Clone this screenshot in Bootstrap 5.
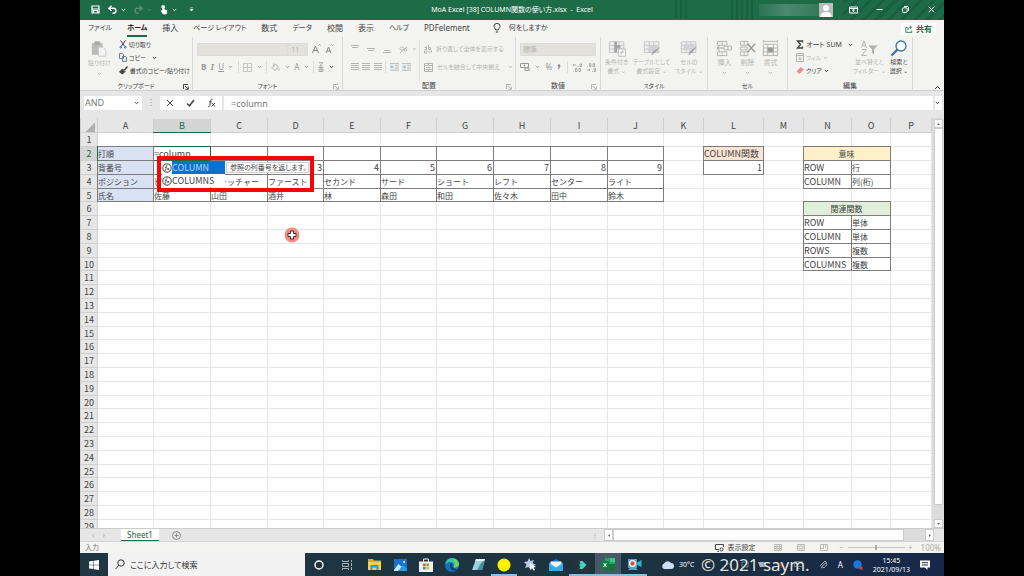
<!DOCTYPE html>
<html lang="ja">
<head>
<meta charset="utf-8">
<meta name="viewport" content="width=device-width, initial-scale=1">
<title>MoA Excel [38] COLUMN関数の使い方.xlsx - Excel</title>
<link href="https://cdn.jsdelivr.net/npm/bootstrap@5.3.0/dist/css/bootstrap.min.css" rel="stylesheet">
<style>
:root{--xl:#1e6b47;--pane:#f3f3f1;--bar:#e6e6e6;--dim:#b4b4b4;--ink:#444}
html,body{height:100%}
body{background:#000;font-family:"Noto Sans","Noto Sans CJK JP",sans-serif;font-size:8px;line-height:12px;color:var(--ink);font-feature-settings:"palt";overflow:hidden}
button,input{font:inherit;color:inherit;font-feature-settings:inherit}
button{border:0;background:none;padding:0;white-space:nowrap;line-height:inherit}
svg{display:block;flex:none}
.desk{height:100vh;padding:0 80px;fill:none;stroke:currentColor}
.app-window{height:100%;background:var(--bar)}
.t6{font-size:6px}
.t7{font-size:7px}
/* title bar */
.titlebar{display:grid;grid-template-columns:1fr auto 1fr;height:20px;color:#fff;background:var(--xl)}
.qat{padding-left:11px;gap:8px}
.win-side{padding-left:86px;background:repeating-linear-gradient(90deg,#1a6040 0 2px,transparent 2px 5px) 82px 0/14px 18px no-repeat,repeating-linear-gradient(90deg,#1a6040 0 2px,transparent 2px 5px) 138px 0/22px 20px no-repeat,repeating-linear-gradient(135deg,#1a6040 0 3px,transparent 3px 9px) 250px 0/140px 20px no-repeat}
.account{width:60px;height:12px;background:linear-gradient(90deg,#2c7353,#4b8a6e 45%,#347a5a)}
.avatar{width:14px;height:14px;background:#b9bdbb;margin-right:7px}
.win-btn{width:26px;display:flex;justify-content:center}
/* menu tabs */
.menu-row{height:18px;background:var(--pane);padding:0 8px;gap:15px}
.menu-row a{color:var(--ink);text-decoration:none;white-space:nowrap;line-height:14px;border-bottom:2px solid transparent}
.menu-row a.on{font-weight:700;color:#222;border-color:var(--xl)}
.share{background:#fff;color:var(--xl);font-weight:700;padding:0 4px;gap:3px}
/* ribbon */
.ribbon{display:grid;grid-template-columns:113fr 150fr 173fr 85fr 107fr 80fr 125fr 31fr;height:54px;background:var(--pane);border-bottom:1px solid #cfcfcf;color:var(--dim);font-size:6px}
.rgroup{position:relative;display:flex;flex-direction:column;padding:3px 4px 0;min-width:0;border-right:1px solid #d8d8d8;margin-bottom:2px}
.rgroup.bare{border:0}
.rbody{height:41px;display:flex}
.rgroup.tight{padding-top:1px}
.tight .rbody{height:43px}
.tight .tall{padding-top:2px}
.rlabel{color:var(--ink);text-align:center;line-height:10px}
.launch{position:absolute;right:3px;bottom:1px}
.live{color:var(--ink)}
.tall{display:flex;flex-direction:column;align-items:center;line-height:9px}
.tall svg{margin-bottom:1px}
.trow{display:flex;align-items:center;height:18px;justify-content:space-between}
.srow{display:flex;align-items:center;height:13px;gap:2px}
.letter{font-size:8px}
.align-col{width:64px}
.fake-combo{height:13px;min-width:0;border:1px solid #dcdcd8;background:#e2e1dc;border-radius:0;padding:0 2px;appearance:none;color:var(--dim);line-height:11px;font-size:7px}
.vr-s{width:1px;height:12px;background:#dadada}
/* formula bar */
.fbar{height:27px;padding:5px 2px 8px 4px;font-size:9px;gap:2px}
.fbar>div,.fbar>input{background:#fff;height:14px;border:0}
.namebox{width:58px;padding:0 3px 0 1px}
.namebox input{width:40px;border:0;padding:0;line-height:14px;color:#777}
.fbtns{width:62px}
.fbar>.dots{width:14px;background:none}
.fbar>.formula{min-width:0;padding:0 0 0 7px;outline:0;border:0;color:#777}
.expand{padding-right:2px}
/* sheet */
.sheet-wrap{min-height:0;overflow:hidden}
.grid-pane{flex:1;min-width:0;overflow:hidden;background:#fff}
.cells{table-layout:fixed;width:100%;border-collapse:collapse;font-family:"Noto Sans CJK JP",sans-serif;font-size:9px;line-height:12px;font-feature-settings:normal}
.cells th{background:var(--bar);font-weight:400;text-align:center;padding:0;border:1px solid #cfcfcf;border-top-color:var(--bar)}
.cells th.sel{background:#d4d4d4;color:var(--xl)}
.cells thead th.sel{border-bottom:1px double var(--xl)}
.cells tbody th.sel{border-right:1px double var(--xl)}
.cells tr{height:14px}
.cells tbody tr:nth-child(5n){height:13px}
.cells tbody tr:nth-child(5n) :is(td,th){line-height:11px}
.cells td{padding:0 1px 0 0;border:1px solid #e6e6e6;white-space:nowrap;overflow:hidden}
.cells td.bx{border:1px double #7c7c7c}
.cells td.jp{font-size:8px}
.cells td.num{text-align:right}
.cells td.mid{text-align:center}
.cells td.c-blue{background:#d9e2f3}
.cells td.c-peach{background:#fbe4d6}
.cells td.c-yellow{background:#fff0ca}
.cells td.c-green{background:#e1eeda}
.cells td.editing{position:relative;overflow:visible;border:1px double var(--xl)}
.cell-input{display:block;width:54px;height:12px;line-height:12px;border:0;padding:0;outline:0}
.corner{width:10px;height:10px;margin:2px 2px 0 auto;background:linear-gradient(135deg,transparent 50%,#b0b0b0 50%)}
.suggest{position:absolute;z-index:3;left:3px;top:9px;width:157px;height:36px;border:4px solid #f60505}
.suggest-list{position:absolute;left:1px;top:1px;width:63px;background:#fff;margin:0;padding:0;list-style:none}
.suggest-list button{display:flex;align-items:center;width:100%;height:13px;color:var(--ink)}
.suggest-list span{flex:1;text-align:left;line-height:13px}
.suggest-list .on span{background:#0a70d2;color:#b5d8fa}
.tip{position:absolute;left:65px;top:2px;width:83px;height:11px;border:1px solid #d0d0d0;background:#fff;font-size:7px;line-height:9px;padding-left:3px;font-feature-settings:"palt"}
.pointer{position:absolute;z-index:3;left:130px;top:80px}
/* scroll bars */
.vscroll{width:12px;padding:1px 1px 0 2px;background:#dcdcdc}
.sbtn{background:#fff;width:9px;height:9px;display:flex;align-items:center;justify-content:center;border:1px solid #ccc;color:#666}
.sthumb{background:#fff;border:1px solid #ccc}
.vgap{height:14px}
.hgap{width:21px}
.tabs-row{height:13px;border-top:1px solid #ccc;color:#aaa}
.sheet-tab{width:38px;height:12px;background:#fff;color:var(--xl);line-height:11px;border-bottom:1px solid var(--xl);margin:0 13px 0 16px}
.hscroll{width:330px;background:#dcdcdc;margin-right:10px}
.status{height:12px;background:var(--pane);border-top:1px solid #d5d5d5;padding:0 3px 0 5px;color:#777;font-size:7px}
.views{gap:15px;margin:0 12px 0 18px;color:#bbb}
.zoomer{appearance:none;width:57px;height:7px;background:linear-gradient(#c4c4c4,#c4c4c4) center/100% 1px no-repeat}
.zoomer::-webkit-slider-thumb{appearance:none;width:2px;height:5px;background:#aaa}
/* taskbar */
.taskbar{position:relative;height:23px;background:linear-gradient(90deg,#1f3743,#1d3440 60%,#17274a);color:#fff}
.start{width:28px}
.find{width:197px;background:#f2f2f2;color:#333;padding-left:7px;gap:5px}
.find input{border:0;background:none;width:160px;padding:0}
.find input::placeholder{color:#333;opacity:1}
.tb{width:26px;display:flex;align-items:center;justify-content:center;border-bottom:2px solid transparent;border-top:2px solid transparent}
.tb.wide{width:28px}
.tb.run{border-bottom-color:#86bfe4;background-clip:padding-box}
.tb.cur{background:#455966;background-clip:border-box}
.weather{gap:5px;padding-left:14px}
.hidden-tray{gap:9px;opacity:.75;padding-left:30px}
.tray{gap:10px;padding-right:14px}
.clock{font-size:7px;line-height:9px;text-align:center}
.credit{position:absolute;z-index:4;left:621px;top:0;font-size:17px;line-height:23px;color:#e0e4e6;white-space:nowrap;text-shadow:0 0 2px #222}
</style>
</head>
<body>
<svg width="0" height="0" class="position-absolute" aria-hidden="true">
  <symbol id="chev" viewBox="0 0 5 4"><path d="M.8 1 2.500 2.700 4.200 1"/></symbol>
  <symbol id="launch" viewBox="0 0 6 6"><path d="M.5 5V.5H5M2 2l3 3M5.300 2.500v2.800H2.500"/></symbol>
  <symbol id="fx" viewBox="0 0 10 10"><circle cx="5" cy="5" r="4.200" fill="#fff"/><path d="M5.500 2.300c-1-.3-1.200.5-1.400 2L3.600 7c-.2.7-.5.9-1 .7M3 4.300h2M5.200 4.800l2 2.400M7.200 4.800l-2 2.400" stroke-width=".8"/></symbol>
  <symbol id="lines" viewBox="0 0 8 8"><path d="M0 .5h8M0 2.500h8M0 4.500h8M0 6.500h8"/></symbol>
  <symbol id="brush" viewBox="0 0 9 9"><path d="M8.500.5 5.500 4" stroke-width="1.500"/><path d="m3.500 3 2.500 2.500L3.500 8 .5 6Z" fill="currentColor"/></symbol>
  <symbol id="sheet" viewBox="0 0 20 18"><path d="M1.500 1.500h16v12h-16zM1.500 5.500h16M1.500 9.500h16M7 1.500v12M12 1.500v12" stroke="#c4c4c4" fill="#efefef"/></symbol>
</svg>
<div class="desk">
<div class="app-window d-flex flex-column">

<header class="titlebar">
  <div class="qat d-flex align-items-center">
    <button aria-label="上書き保存"><svg width="9" height="9" viewBox="0 0 9 9"><path d="M1 1h7v7H1zM2.500 8V5.500h4V8M1 4h7" stroke-width="1.200"/></svg></button>
    <button class="d-flex align-items-center gap-1" aria-label="元に戻す"><svg width="9" height="9" viewBox="0 0 9 9"><path d="M3.500.8.9 3.300l2.600 2.500M1 3.300h4.500a2.400 2.400 0 0 1 0 4.900H4.500" stroke-width="1.400"/></svg><svg width="5" height="4"><use href="#chev"/></svg></button>
    <button class="d-flex align-items-center gap-1 opacity-25" aria-label="やり直し"><svg width="9" height="9" viewBox="0 0 9 9"><path d="M5.500.8 8.100 3.300 5.500 5.800M8 3.300H3.500a2.400 2.400 0 0 0 0 4.900h1" stroke-width="1.400"/></svg><svg width="5" height="4"><use href="#chev"/></svg></button>
    <button class="d-flex align-items-center gap-1" aria-label="タッチ/マウス モード"><svg width="8" height="10" viewBox="0 0 8 10"><path d="M2.500 1v5L1 5.500 3 9h3.500L7 5.500 4 4.500V1Z" fill="#fff" stroke-width=".6"/><circle cx="3.200" cy="1.800" r="1.600" stroke-width=".8"/></svg><svg width="5" height="4"><use href="#chev"/></svg></button>
    <button class="ms-1" aria-label="カスタマイズ"><svg width="5" height="5" viewBox="0 0 5 5"><path d="M1 .8h3M1 2.500h3L2.500 4Z" fill="#fff" stroke-width=".6"/></svg></button>
  </div>
  <div class="t7 align-self-center">MoA Excel [38] COLUMN関数の使い方.xlsx &nbsp;-&nbsp; Excel</div>
  <div class="win-side d-flex align-items-center justify-content-end">
    <div class="account"></div>
    <div class="avatar"><svg width="14" height="14" viewBox="0 0 14 14" stroke="none" fill="#fff"><circle cx="7" cy="5" r="3"/><path d="M1.500 14c0-4 2.500-5 5.500-5s5.500 1 5.500 5Z"/></svg></div>
    <button class="win-btn" aria-label="リボンの表示"><svg width="9" height="8" viewBox="0 0 9 8"><path d="M.5 1h8v6h-8zM.5 2.500h8M4.500 6V3.500M3.200 4.500 4.500 3.300l1.300 1.200"/></svg></button>
    <button class="win-btn" aria-label="最小化"><svg width="7" height="7" viewBox="0 0 7 7"><path d="M.5 3.500h6"/></svg></button>
    <button class="win-btn" aria-label="元に戻す(縮小)"><svg width="7" height="7" viewBox="0 0 7 7"><rect x=".5" y="1.800" width="4.600" height="4.600" rx="1"/><path d="M2 .6h3.500q1 0 1 1V5"/></svg></button>
    <button class="win-btn" aria-label="閉じる"><svg width="7" height="7" viewBox="0 0 7 7"><path d="m.7.7 5.600 5.600M6.300.7.7 6.300"/></svg></button>
  </div>
</header>

<nav class="menu-row d-flex align-items-center">
  <a href="#" class="t7">ファイル</a><a href="#" class="on t7">ホーム</a><a href="#">挿入</a><a href="#" class="t7">ページ レイアウト</a><a href="#">数式</a><a href="#" class="t7">データ</a><a href="#">校閲</a><a href="#">表示</a><a href="#" class="t7">ヘルプ</a><a href="#">PDFelement</a>
  <a href="#" class="t7 d-flex align-items-center gap-2 ms-2"><svg width="8" height="10" viewBox="0 0 8 10"><path d="M2.700 7C2.700 5.500 1 5 1 3.300a3 3 0 0 1 6 0C7 5 5.300 5.500 5.300 7ZM2.800 9h2.400"/></svg>何をしますか</a>
  <button class="share d-flex align-items-center ms-auto"><svg width="8" height="8" viewBox="0 0 8 8"><path d="M2.500 2.500H.8v4.800h6V5.500M2.800 5c0-2 1.200-2.800 3-2.800M4.800.7 6.600 2.200 4.800 3.800" stroke-width=".9"/></svg>共有</button>
</nav>

<section class="ribbon">
  <div class="rgroup tight">
    <div class="rbody">
      <button class="tall me-1 px-1"><svg width="18" height="18" viewBox="0 0 20 19"><path d="M2 3h12v13H2z" fill="#bdbabb" stroke="none"/><path d="M5 1h6v4H5z" fill="#a8a8a8" stroke="none"/><path d="M9.500 7.500h5l3 3v7h-8z" fill="#f5f5f5" stroke="#c9c7cc"/></svg>貼り付け<svg width="5" height="4" class="mt-1"><use href="#chev"/></svg></button>
      <div class="live">
        <button class="srow"><svg width="8" height="9" viewBox="0 0 8 9"><path d="M1.500.5 5.500 6M6.500.5 2.500 6"/><path d="M1 6.500h1.500V8H1zM5.500 6.500H7V8H5.500z" stroke="#4b86c2"/></svg>切り取り</button>
        <button class="srow"><svg width="8" height="9" viewBox="0 0 8 9"><path d="M.5.5h3l1 1v4h-4zM3.500 3.500h3l1 1v4h-4z" fill="#e8eef5" stroke="#77808a"/></svg>コピー<svg width="5" height="4" class="ms-1"><use href="#chev"/></svg></button>
        <button class="srow" disabled><svg width="9" height="9"><use href="#brush"/></svg>書式のコピー/貼り付け</button>
      </div>
    </div>
    <div class="rlabel">クリップボード</div><svg class="launch live" width="6" height="6"><use href="#launch"/></svg>
  </div>

  <div class="rgroup">
    <div class="rbody flex-column">
      <div class="trow justify-content-start">
        <input class="fake-combo flex-grow-1" aria-label="フォント名" disabled>
        <select class="fake-combo pe-2" aria-label="フォント サイズ" disabled><option>11</option></select>
        <button class="ms-1" aria-label="拡大"><svg width="9" height="10" viewBox="0 0 9 10" stroke="#888"><path d="M.5 9 3.500 2l3 7M1.500 6.500h4M6.500 1.500l1-1 1 1"/></svg></button>
        <button class="ms-1 me-1" aria-label="縮小"><svg width="9" height="10" viewBox="0 0 9 10" stroke="#888"><path d="M1 9l2.500-6L6 9M2 7h3M6.500.5l1 1 1-1"/></svg></button>
      </div>
      <div class="trow px-1" style="color:#999">
        <button class="letter fw-bold">B</button><button class="letter fst-italic fw-bold">I</button><button class="letter text-decoration-underline">U</button><svg width="5" height="4"><use href="#chev"/></svg><i class="vr-s"></i>
        <button aria-label="罫線"><svg width="9" height="9" viewBox="0 0 9 9" stroke="#c5c5c5"><path d="M.5.5h8v8h-8zM4.500.5v8M.5 4.500h8"/></svg></button><svg width="5" height="4"><use href="#chev"/></svg><i class="vr-s"></i>
        <button aria-label="塗りつぶし"><svg width="9" height="9" viewBox="0 0 9 9" stroke="#aaa"><path d="M1 4.500 4.500 1 7.500 4 4 7.500ZM3 .5v3M8 5.500v2"/></svg></button><svg width="5" height="4"><use href="#chev"/></svg>
        <button class="letter">A</button><svg width="5" height="4"><use href="#chev"/></svg><i class="vr-s"></i>
        <button aria-label="ふりがな"><svg width="6" height="10" viewBox="0 0 6 10" stroke="#aaa"><path d="M1 .7h4L1.500 4h3M.5 5.500h5M1 7h4v2.500H1zM3 5.500v4"/></svg></button><svg class="live" width="5" height="4"><use href="#chev"/></svg>
      </div>
    </div>
    <div class="rlabel">フォント</div><svg class="launch" width="6" height="6"><use href="#launch"/></svg>
  </div>

  <div class="rgroup">
    <div class="rbody gap-2">
      <div class="align-col ps-1">
        <div class="trow justify-content-start gap-1">
          <svg width="8" height="8" viewBox="0 0 8 8"><path d="M0 .5h8M1 2.500h6"/></svg><svg width="8" height="8" class="ms-1" viewBox="0 0 8 8"><path d="M0 3.500h8M1 5.500h6"/></svg><svg width="8" height="8" class="ms-1" viewBox="0 0 8 8"><path d="M1 5.500h6M0 7.500h8"/></svg><i class="vr-s"></i>
          <svg width="9" height="9" viewBox="0 0 9 9"><path d="M1 8 8 2M1 3.500l2-2 2 2-2 2ZM4.500 5l2-2 1.500 2-1.500 1.500Z"/></svg><svg width="5" height="4"><use href="#chev"/></svg>
        </div>
        <div class="trow">
          <svg width="8" height="8"><use href="#lines"/></svg><svg width="8" height="8"><use href="#lines"/></svg><svg width="8" height="8"><use href="#lines"/></svg><i class="vr-s"></i>
          <svg width="9" height="8" viewBox="0 0 9 8"><path d="M0 .7h9M5 2.800h4M5 5h4M0 7.200h9"/><path d="M4 4H.5M2 2.500.5 4 2 5.500" stroke="#8fa9c0"/></svg><svg width="9" height="8" viewBox="0 0 9 8"><path d="M0 .7h9M5 2.800h4M5 5h4M0 7.200h9"/><path d="M0 4h3.500M2 2.500 3.500 4 2 5.500" stroke="#8fa9c0"/></svg>
        </div>
      </div>
      <div class="flex-grow-1 border-start ps-1">
        <button class="trow justify-content-start gap-1"><svg width="8" height="9" viewBox="0 0 8 9"><path d="M.5 2.500h2v2h-2M2.500 1v3.500M4.500 0v4M4.500 2.500h2v2h-2M3 6H.5v2H3M7.500 5.500v1.500H4.500"/></svg>折り返して全体を表示する</button>
        <button class="trow justify-content-start gap-1"><svg width="9" height="9" viewBox="0 0 9 9"><path d="M.5.5h8v8h-8zM.5 2.500h8M.5 6.500h8M4.500.5v2M4.500 6.500v2M2 4.500h5"/></svg>セルを結合して中央揃え<svg width="5" height="4" class="ms-1"><use href="#chev"/></svg></button>
      </div>
    </div>
    <div class="rlabel t7">配置</div><svg class="launch" width="6" height="6"><use href="#launch"/></svg>
  </div>

  <div class="rgroup">
    <div class="rbody flex-column">
      <div class="trow"><select class="fake-combo w-100" aria-label="表示形式" disabled><option>標準</option></select></div>
      <div class="trow" style="color:#999">
        <svg width="10" height="8" viewBox="0 0 10 8"><path d="M.5.5h8v4h-8zM4.500 1.500v2M5 5h4v2.500H5z"/></svg><svg width="5" height="4"><use href="#chev"/></svg><button class="letter">%</button><button class="fw-bold" aria-label="桁区切り"><svg width="4" height="6" viewBox="0 0 4 6"><path d="M2 .5a1 1 0 1 0 0 2L1 5C3 4 4 .5 2 .5Z" fill="#888" stroke="#888" stroke-width=".5"/></svg></button><i class="vr-s"></i>
        <svg width="9" height="9" viewBox="0 0 9 9"><path d="M0 2h3M1 1 0 2l1 1M5 3.500h.8M7 1h1.500v2.500H7zM.3 8.500H1M2.500 5.500H4v3H2.500zM6 5.500h1.500v3H6z" stroke-width=".8"/></svg>
        <svg width="9" height="9" viewBox="0 0 9 9"><path d="M.3 3.500H1M2.500.7H4v3H2.500zM6 .7h1.500v3H6zM0 7h3M2 6l1 1-1 1M5 8.500h.8M7 5.500h1.500v3H7z" stroke-width=".8"/></svg>
      </div>
    </div>
    <div class="rlabel t7">数値</div><svg class="launch" width="6" height="6"><use href="#launch"/></svg>
  </div>

  <div class="rgroup">
    <div class="rbody justify-content-between">
      <button class="tall"><svg width="18" height="17" viewBox="0 0 20 18"><use href="#sheet" width="20" height="18"/><path d="M7 1.500v12h3V9h4V5.500h-4v-4Z" fill="#a9a4aa" stroke="none"/><path d="M11.500 9.500h8v8h-8z" fill="#fff"/><path d="M13 13h5M14 16l3-5"/></svg>条件付き<br>書式 ⌄</button>
      <button class="tall"><svg width="18" height="17" viewBox="0 0 20 18"><use href="#sheet" width="20" height="18"/><path d="M6 6h11v7H6z" fill="#d5d0d5" stroke="none"/><path d="m19 7-5 6-5 4 2-5Z" fill="#a5a2a5" stroke="none"/></svg>テーブルとして<br>書式設定 ⌄</button>
      <button class="tall"><svg width="18" height="17" viewBox="0 0 20 18"><use href="#sheet" width="20" height="18"/><path d="M4 4h12v7H4z" fill="#d5d0d5" stroke="none"/><path d="m19 6-5 7-5 4 2-5Z" fill="#a5a2a5" stroke="none"/></svg>セルの<br>スタイル ⌄</button>
    </div>
    <div class="rlabel">スタイル</div>
  </div>

  <div class="rgroup">
    <div class="rbody justify-content-between px-1 t7">
      <button class="tall"><svg width="17" height="17" viewBox="0 0 18 18"><path d="M1.500 1.500h10v4h-10zM6.500 1.500v4M8.500 6.500h8v4h-8zM12.500 6.500v4M1.500 12.500h10v4h-10zM6.500 12.500v4"/><path d="M8 8.500H1M4 5.500 1 8.500l3 3" stroke="#999"/></svg>挿入<svg width="5" height="4" class="mt-1"><use href="#chev"/></svg></button>
      <button class="tall"><svg width="17" height="17" viewBox="0 0 18 18"><path d="M1.500 1.500h8v4h-8zM5.500 1.500v4M1.500 7.500h7v3h-7zM1.500 12.500h8v4h-8zM5.500 12.500v4"/><path d="m9 4 8 9M17 4l-8 9" stroke="#999" stroke-width="1.500"/></svg>削除<svg width="5" height="4" class="mt-1"><use href="#chev"/></svg></button>
      <button class="tall"><svg width="17" height="17" viewBox="0 0 18 18"><path d="M1.500 4.500h15v12h-15zM6 4.500v12M12 4.500v12M1.500 8.500h15M1.500 12.500h15M1.500 0v3M16.500 0v3M2 1.500h14"/><path d="M6 8h6v5H6z" fill="#999"/></svg>書式<svg width="5" height="4" class="mt-1"><use href="#chev"/></svg></button>
    </div>
    <div class="rlabel">セル</div>
  </div>

  <div class="rgroup tight">
    <div class="rbody">
      <div class="flex-grow-1 ps-1">
        <button class="srow live t7"><svg width="8" height="9" viewBox="0 0 8 9"><path d="M6.500 2.500V1h-5L4.500 4.500l-3 3.500h5V6.500" stroke-width="1.400"/></svg>オート SUM<svg width="5" height="4" class="ms-1"><use href="#chev"/></svg></button>
        <button class="srow"><svg width="8" height="9" viewBox="0 0 8 9"><path d="M.5.5h7v8h-7zM.5 2.500h7M4 3.500V7M2.500 5.500 4 7l1.500-1.500"/></svg>フィル<svg width="5" height="4"><use href="#chev"/></svg></button>
        <button class="srow live"><svg width="8" height="9" viewBox="0 0 8 9" stroke="none"><path d="M4.500 1 8 3.500 3.500 8 .5 5.500Z" fill="#e88f93"/></svg>クリア<svg width="5" height="4"><use href="#chev"/></svg></button>
      </div>
      <button class="tall me-1"><svg width="18" height="17" viewBox="0 0 18 17"><path d="M1.500 7.500 4 1l2.500 6.500M2.500 5.500h3M1.800 9.500h4.500L1.800 15.500h5"/><path d="M8.500 5.500h9l-3.500 4v5l-2-1.500V9.500Z" fill="#b0b0b0" stroke="none"/></svg>並べ替えと<br>フィルター ⌄</button>
      <button class="tall live me-1"><svg width="18" height="17" viewBox="0 0 18 17" stroke="#3a77a8"><circle cx="11" cy="6" r="5" fill="#fff" stroke-width="1.300"/><path d="M7.500 9.500 1.500 15.500" stroke-width="2.400"/></svg>検索と<br>選択 ⌄</button>
    </div>
    <div class="rlabel t7">編集</div>
  </div>
  <div class="rgroup bare"><svg class="launch live" width="7" height="5" viewBox="0 0 7 5"><path d="M1 4 3.500 1.500 6 4"/></svg></div>
</section>

<div class="fbar d-flex">
  <div class="namebox d-flex align-items-center justify-content-between"><input value="AND" aria-label="名前ボックス"><svg width="5" height="4"><use href="#chev"/></svg></div>
  <div class="dots d-flex align-items-center justify-content-center"><svg width="2" height="8" viewBox="0 0 2 8"><path d="M1 0v8" stroke-dasharray="1 2" stroke="#999"/></svg></div>
  <div class="fbtns d-flex align-items-center justify-content-around">
    <button aria-label="キャンセル"><svg width="8" height="8" viewBox="0 0 8 8"><path d="m1 1 6 6M7 1 1 7"/></svg></button>
    <button aria-label="入力"><svg width="9" height="8" viewBox="0 0 9 8"><path d="m1 4.500 2.500 2.300L8 1" stroke-width="1.500"/></svg></button>
    <button aria-label="関数の挿入"><svg width="9" height="10" viewBox="0 0 9 10"><path d="M5.500 1.200c-1.300-.5-1.700.5-2 2.300L2.800 7.500c-.2 1-.7 1.300-1.500 1M2 3.800h2.800M4.800 5 8 8.500M8 5 4.500 8.500"/></svg></button>
  </div>
  <input class="formula flex-grow-1 me-n1" value="=column" aria-label="数式バー">
  <div class="expand d-flex align-items-center"><svg width="5" height="4"><use href="#chev"/></svg></div>
</div>

<main class="sheet-wrap d-flex flex-grow-1">
  <div class="grid-pane">
    <table class="cells">
      <colgroup id="cols"></colgroup>
      <thead><tr id="heads"><th><div class="corner"></div></th></tr></thead>
      <tbody id="rows"></tbody>
    </table>
  </div>
  <div class="vscroll d-flex flex-column">
    <button class="sbtn" aria-label="上へ"><svg width="5" height="4" viewBox="0 0 5 4"><path d="M1 3h3L2.500 1Z" fill="#666" stroke="none"/></svg></button>
    <div class="sthumb flex-grow-1"></div><div class="vgap"></div>
    <button class="sbtn" aria-label="下へ"><svg width="5" height="4" viewBox="0 0 5 4"><path d="M1 1h3L2.500 3Z" fill="#666" stroke="none"/></svg></button>
  </div>
</main>

<div class="tabs-row d-flex">
  <div class="d-flex align-items-center gap-2 ps-2"><span class="ps-1">‹</span><span>›</span></div>
  <button class="sheet-tab">Sheet1</button>
  <button aria-label="新しいシート" style="color:#888"><svg width="9" height="9" viewBox="0 0 9 9"><circle cx="4.500" cy="4.500" r="4"/><path d="M2.500 4.500h4M4.500 2.500v4"/></svg></button>
  <svg class="ms-auto me-2 mt-1" width="2" height="6" viewBox="0 0 2 6"><path d="M1 0v6" stroke-dasharray="1 1"/></svg>
  <div class="hscroll d-flex">
    <button class="sbtn h-100" aria-label="左へ"><svg width="4" height="5" viewBox="0 0 4 5"><path d="M3 1v3L1 2.500Z" fill="#666" stroke="none"/></svg></button>
    <div class="sthumb flex-grow-1"></div><div class="hgap"></div>
    <button class="sbtn h-100" aria-label="右へ"><svg width="4" height="5" viewBox="0 0 4 5"><path d="M1 1v3L3 2.500Z" fill="#666" stroke="none"/></svg></button>
  </div>
</div>

<div class="status d-flex align-items-center">
  <span>入力</span>
  <button class="live ms-auto d-flex align-items-center gap-1"><svg width="9" height="8" viewBox="0 0 9 8"><path d="M8.500 3V.5h-8v5H4M2.500 7.500H4"/><circle cx="6.500" cy="5.500" r="1.500"/></svg>表示設定</button>
  <div class="views d-flex align-items-center">
    <svg width="8" height="7" viewBox="0 0 8 7"><path d="M.5.5h7v6h-7zM.5 2.500h7M.5 4.500h7M3 .5v6M5.500.5v6"/></svg>
    <svg width="8" height="7" viewBox="0 0 8 7"><path d="M.5.5h7v6h-7zM2 2h4v3H2z"/></svg>
    <svg width="8" height="7" viewBox="0 0 8 7"><path d="M.5.5h7v6h-7zM.5 4.500h3v-4M5.500.5v3"/></svg>
  </div>
  <div class="d-flex align-items-center gap-1" style="color:#aaa"><span>−</span><input type="range" class="zoomer" aria-label="ズーム"><span>+</span><span class="ms-1 letter">100%</span></div>
</div>

<footer class="taskbar d-flex">
  <button class="start d-flex align-items-center justify-content-center" aria-label="スタート"><svg width="10" height="10" viewBox="0 0 10 10" stroke="none"><path d="M0 1.500 4.500.8v3.900H0zM5 .7 10 0v4.700H5zM0 5.200h4.500v3.900L0 8.500zM5 5.200h5V10l-5-.7z" fill="#fff"/></svg></button>
  <label class="find d-flex align-items-center"><svg width="10" height="11" viewBox="0 0 10 11"><circle cx="6" cy="4" r="3.200"/><path d="M3.700 6.300.7 10"/></svg><input placeholder="ここに入力して検索" aria-label="検索"></label>
  <button class="tb wide" aria-label="Cortana"><svg width="10" height="10" viewBox="0 0 10 10"><circle cx="5" cy="5" r="4" stroke-width="1.400"/></svg></button>
  <button class="tb wide" aria-label="タスク ビュー"><svg width="11" height="10" viewBox="0 0 11 10" stroke="#a5afb4"><path d="M.5 0v1.500h6V0M.5 10V8.500h6V10M.5 3.500h6v3h-6zM9.500 0v2M9.500 3v3M9.500 7v3"/></svg></button>
  <button class="tb" aria-label="エクスプローラー"><svg width="13" height="11" viewBox="0 0 13 11" stroke="none"><path d="M0 0h5l1 1.500h7V11H0z" fill="#e7a737"/><path d="M0 3h13v8H0z" fill="#f8ce62"/><path d="M2.500 6h8v5h-2V8.500h-4V11h-2z" fill="#3f95cf"/></svg></button>
  <button class="tb" aria-label="フォト"><svg width="13" height="12" viewBox="0 0 13 12" stroke="none"><path d="M0 0h13v12H0z" fill="#1672ca"/><path d="m0 11 4.500-6 8 7H0z" fill="#cce8fa"/><path d="M4 12 9 6l4 4v2z" fill="#2b9aeb"/><circle cx="10" cy="3" r="1" fill="#fff"/></svg></button>
  <button class="tb" aria-label="Microsoft Store"><svg width="14" height="14" viewBox="0 0 14 14" stroke="none"><path d="M4.500 4V1h5v3" stroke="#fff"/><path d="M0 3.500h14V14H0z" fill="#f2f2f2"/><path d="M4 5.500h2.700v2.700H4z" fill="#e85635"/><path d="M7.300 5.500H10v2.700H7.300z" fill="#75b62d"/><path d="M4 8.800h2.700v2.700H4z" fill="#2a9de0"/><path d="M7.300 8.800H10v2.700H7.300z" fill="#f5b91d"/></svg></button>
  <button class="tb" aria-label="Edge"><svg width="14" height="14" viewBox="0 0 14 14" stroke="none"><circle cx="7" cy="7" r="7" fill="#1571bd"/><path d="M.3 6C1 2 4 0 7 0c4 0 7 3 7 6 0 2-2 3.500-4 3.500-1.500 0-1.500-1-1-1.500C10 6 7 3.500 4.500 4 2 4.500 1 6 .3 6Z" fill="#35c3b0"/><path d="M10 1c3 1.500 4 4 4 5.500S12 9.500 10 9.500c-1 0-1.500-.8-1-1.500 2-2 1-4.500-1-6Z" fill="#6ed45c"/><path d="M5 8c0-2 1-3 2.500-3C6 7 7.500 11 12 11.200 9 14 5 12 5 8Z" fill="#123b66"/></svg></button>
  <button class="tb" aria-label="メモ帳"><svg width="13" height="13" viewBox="0 0 13 13" stroke="none"><path d="M4 1h9l-3 11H0z" fill="#9bd2dd"/><path d="M4 1h9l-.5 2H3.200z" fill="#e6f1f1"/><path d="M9 5 13 2l-3 10H5z" fill="#4e8f9f"/></svg></button>
  <button class="tb run" aria-label="付箋"><svg width="14" height="14" viewBox="0 0 14 14" stroke="none"><circle cx="7" cy="7" r="6.500" fill="#fff200"/></svg></button>
  <button class="tb" aria-label="スクリーン ツール"><svg width="13" height="13" viewBox="0 0 13 13" stroke="none"><path d="m5 0 1.500 3L10 2 8.500 5 12 7 8 8l-1 4-2.500-3L1 10l1.500-3.500L0 4l3.500-.5z" fill="#b7cbf2"/><path d="m6 5 6 4-2.500.5L11 12l-1.500.8L8 10l-2 2z" fill="#fff"/></svg></button>
  <button class="tb" aria-label="メール"><svg width="14" height="12" viewBox="0 0 14 12" stroke="none"><path d="m0 4 7-4 7 4v8H0z" fill="#1675c7"/><path d="M1.500 2.500h11V7L7 9.500 1.500 7z" fill="#eef4f8"/><path d="m0 4 7 4.500L14 4v8H0z" fill="#35a9ee"/></svg></button>
  <button class="tb run" aria-label="Filmora"><svg width="14" height="14" viewBox="0 0 14 14" stroke="none"><path d="M0 0h14v14H0z" fill="#28313c"/><path d="M4.500 3h3l4 4-4 4h-3l1-3-2-1 2-1z" fill="#42d5bd"/></svg></button>
  <button class="tb run cur" aria-label="Excel"><svg width="14" height="13" viewBox="0 0 14 13" stroke="none"><path d="M4 0h10v13H4z" fill="#23a466"/><path d="M9 0h5v4H9z" fill="#3ec481"/><path d="M4 6h10v7H4z" fill="#16713f"/><path d="M0 3h8v8H0z" fill="#107c41"/><path d="m2.500 5 3 4M5.500 5l-3 4" stroke="#fff"/></svg></button>
  <button class="tb run" aria-label="レコーダー"><svg width="15" height="13" viewBox="0 0 15 13" stroke="none"><path d="M1 1h9v9H1zM10 4.500 14.500 2v7L10 7zM3 10h6l2 2H1z" fill="#3eafc9"/><circle cx="5.500" cy="5.500" r="3.500" fill="#fff"/><circle cx="5.500" cy="5.500" r="2.200" fill="#e84a3b"/></svg></button>
  <div class="weather d-flex align-items-center"><svg width="13" height="9" viewBox="0 0 13 9" stroke="none"><path d="M3 9a3 3 0 0 1 0-5.500 4 4 0 0 1 7-.5 3 3 0 0 1 0 6z" fill="#c7e2f6"/></svg><span class="t7">30°C</span></div>
  <div class="hidden-tray d-flex align-items-center" aria-hidden="true">
    <svg width="8" height="9" viewBox="0 0 8 9" stroke="#93a3ad"><path d="M1.500 5.500 4 3l2.500 2.500"/></svg>
    <svg width="8" height="9" viewBox="0 0 8 9" stroke="#93a3ad"><path d="M1 2h6v5H1z"/></svg>
    <svg width="10" height="9" viewBox="0 0 10 9" stroke="none"><path d="M0 2h8v5H2z" fill="#dfe6ea"/></svg>
    <svg width="8" height="9" viewBox="0 0 8 9" stroke="none"><circle cx="4" cy="5" r="2.500" fill="#d8432d"/></svg>
    <svg width="9" height="9" viewBox="0 0 9 9" stroke="#93a3ad"><path d="M.5 1.500h8v5h-8zM3 8.500h3"/></svg>
  </div>
  <div class="tray d-flex align-items-center ms-auto">
    <svg width="9" height="9" viewBox="0 0 9 9" stroke="#ccd4da"><path d="m1 6 5-5 1.500 1.500-5 4M2 8c2-2 3 1 4-1s3-2 1-4" stroke-width=".8"/></svg>
    <span>A</span>
    <svg width="10" height="10" viewBox="0 0 10 10" stroke="none"><circle cx="4.500" cy="4.500" r="4.200" fill="#1a77db"/><circle cx="8" cy="8" r="1.800" fill="#d8432d"/></svg>
    <time class="clock">15:45<br>2021/09/13</time>
    <svg width="10" height="10" viewBox="0 0 10 10" stroke="#1d2b45"><path d="M0 .5h10v7H7.500V10L5 7.500H0z" fill="#fff" stroke="none"/><path d="M2 2.700h6M2 5h6"/></svg>
  </div>
  <div class="credit">© 2021 saym.</div>
</footer>
</div>
</div>

<script>
const widths = [17,56,57,57,56,57,56,57,57,57,56,40,60,40,48,39,41];
const letters = 'ABCDEFGHIJKLMNOP'.split('');
const cells = {};
const put = (ref, text, cls) => cells[ref] = {text, cls: 'bx ' + (cls || '')};

['打順','背番号','ポジション','氏名'].forEach((t, i) => put('A' + (i + 2), t, 'jp c-blue'));
const positions = ['ピッチャー','キャッチャー','ファースト','セカンド','サード','ショート','レフト','センター','ライト'];
const names = ['佐藤','山田','酒井','林','森田','和田','佐々木','田中','鈴木'];
positions.forEach((p, i) => {
  const c = letters[i + 1];
  put(c + 2, '');
  put(c + 3, i < 2 ? '' : i + 1, 'num');
  put(c + 4, p, 'jp');
  put(c + 5, names[i], 'jp');
});
put('L2', 'COLUMN関数', 'c-peach');
put('L3', 1, 'num');
put('N2', '意味', 'jp mid c-yellow');
put('N6', '関連関数', 'jp mid c-green');
[[3,'ROW','行'],[4,'COLUMN','列(桁)'],[7,'ROW','単体'],[8,'COLUMN','単体'],[9,'ROWS','複数'],[10,'COLUMNS','複数']]
  .forEach(([r, n, o]) => { put('N' + r, n); put('O' + r, o, 'jp'); });

const editor = `<input class="cell-input" value="=column" aria-label="B2">
  <div class="suggest"><ul class="suggest-list">
    <li><button class="on"><svg width="10" height="10"><use href="#fx"/></svg><span>COLUMN</span></button></li>
    <li><button><svg width="10" height="10"><use href="#fx"/></svg><span>COLUMNS</span></button></li>
  </ul><div class="tip">参照の列番号を返します。</div></div>
  <svg class="pointer" width="16" height="16" viewBox="0 0 16 16" stroke="none"><circle cx="8" cy="8" r="7.500" fill="#f58a80"/><path d="M6.500 4h3v2.500H12v3H9.500V12h-3V9.500H4v-3h2.500z" fill="#fff" stroke="#333"/></svg>`;

document.getElementById('cols').innerHTML = widths.map(w => `<col style="width:${w}px">`).join('');
document.getElementById('heads').innerHTML += letters.map(l => `<th class="${l === 'B' ? 'sel' : ''}">${l}</th>`).join('');
let html = '';
for (let r = 1; r <= 29; r++) {
  html += `<tr><th class="${r === 2 ? 'sel' : ''}">${r}</th>`;
  for (const l of letters) {
    const ref = l + r;
    if (ref === 'O2' || ref === 'O6') continue;
    if (ref === 'B2') { html += `<td class="editing">${editor}</td>`; continue; }
    const c = cells[ref], span = ref === 'N2' || ref === 'N6' ? ' colspan="2"' : '';
    html += c ? `<td class="${c.cls}"${span}>${c.text}</td>` : '<td></td>';
  }
  html += '</tr>';
}
document.getElementById('rows').innerHTML = html;
</script>
<script src="https://cdn.jsdelivr.net/npm/bootstrap@5.3.0/dist/js/bootstrap.bundle.min.js"></script>
</body>
</html>
